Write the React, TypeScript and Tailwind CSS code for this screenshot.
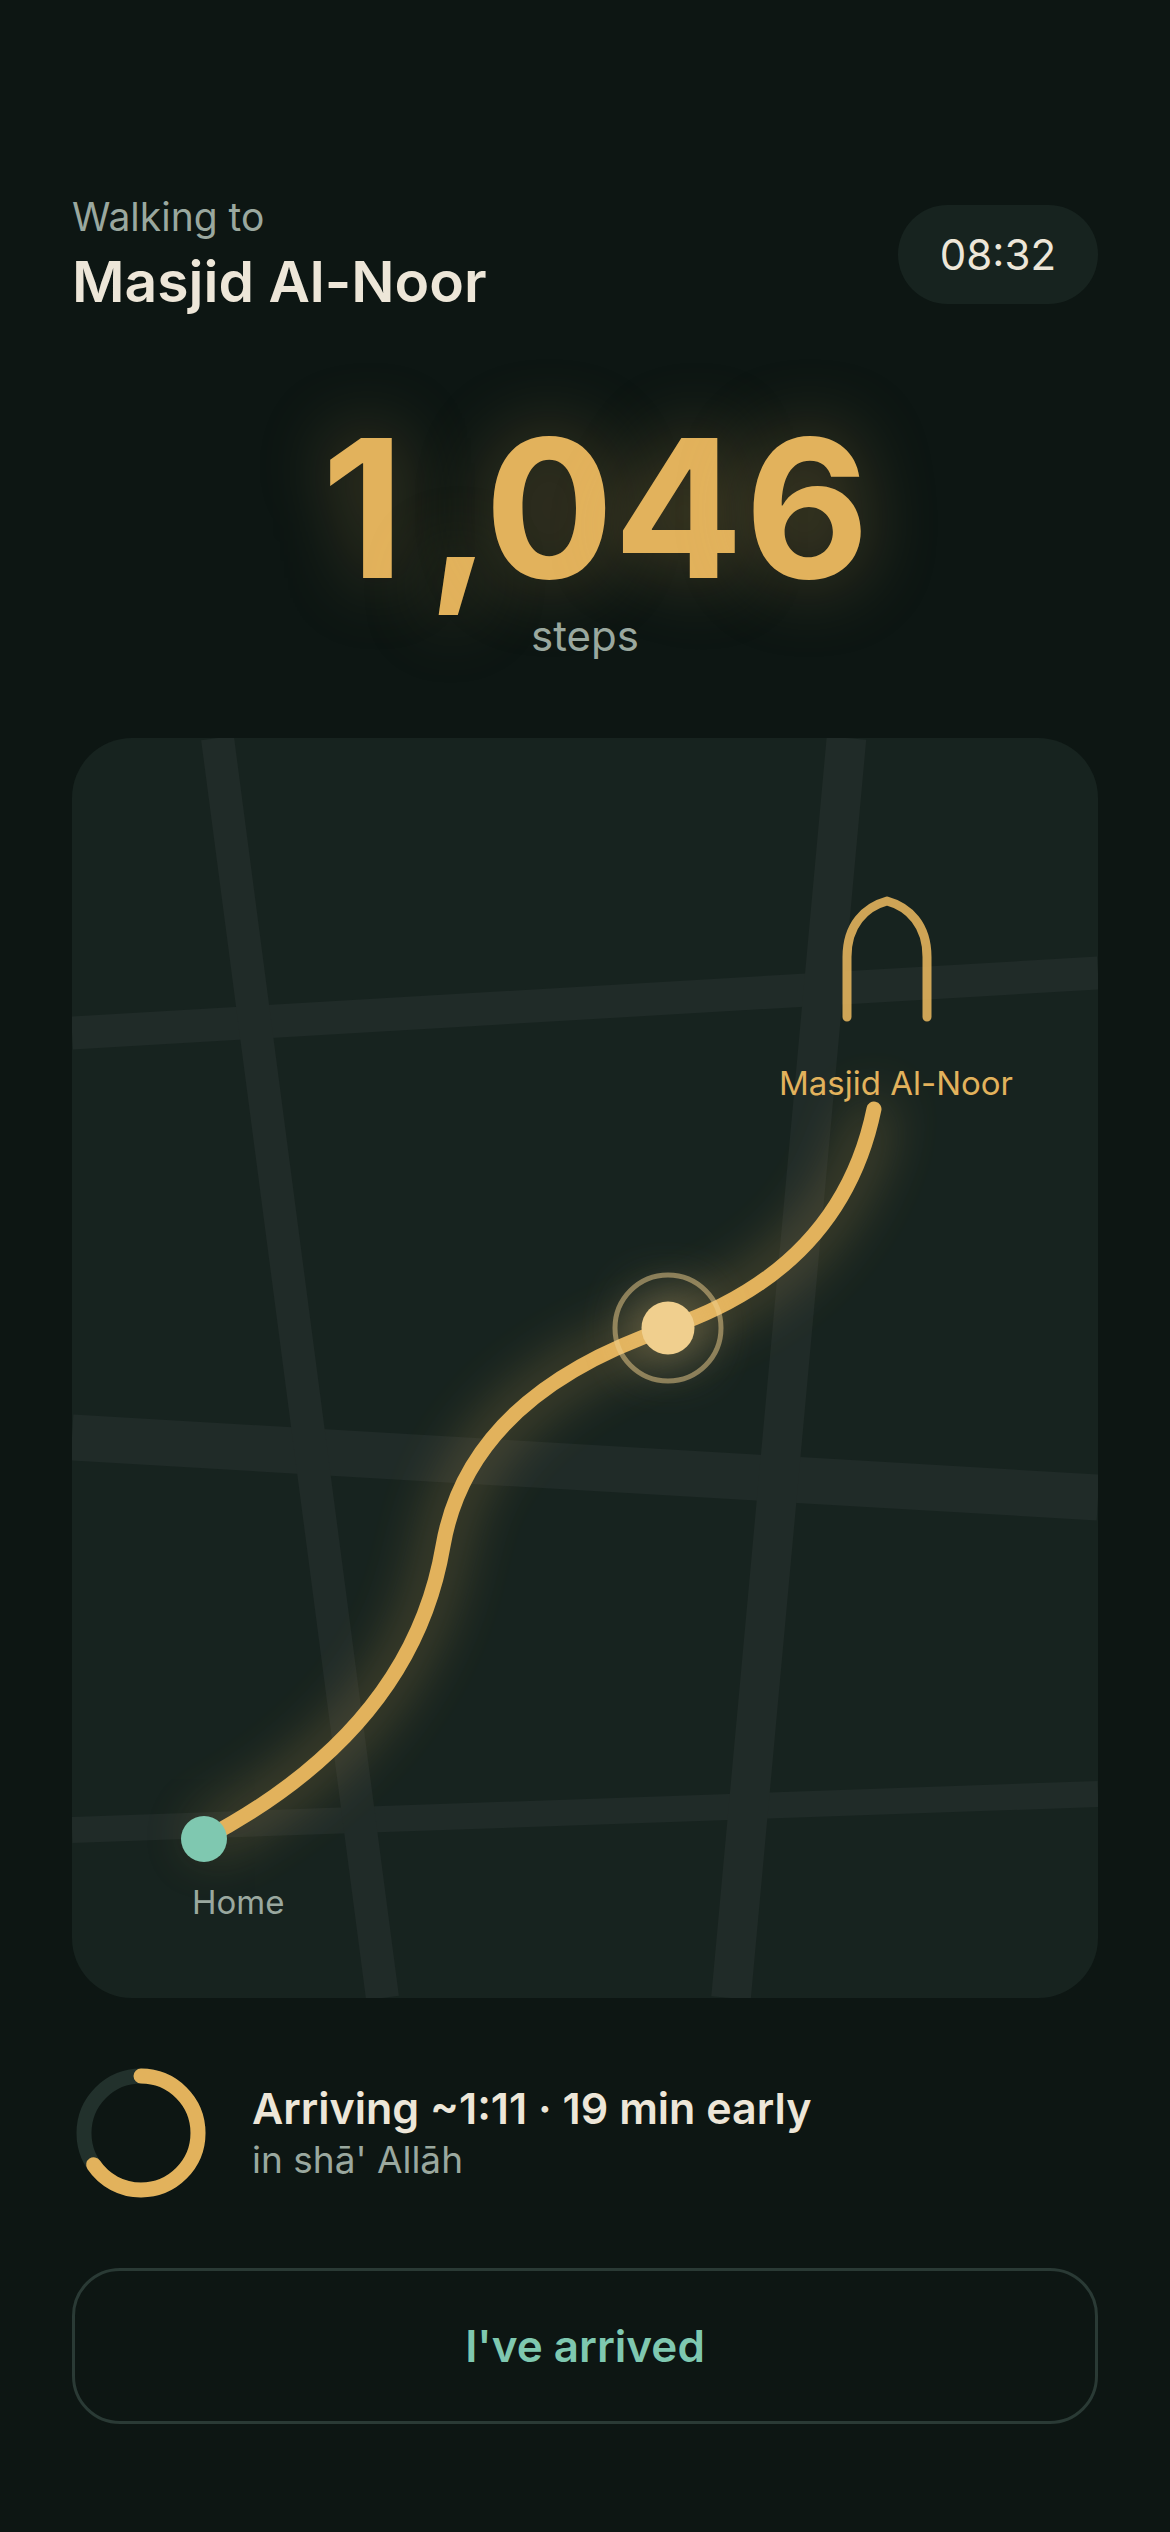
const ROUTE =
  "M132 1101 Q340 991 371 808 Q397 658 596 590 Q769 531 802 371";

const ROADS = [
  { d: "M0 295 L1026 235", width: 33 },
  { d: "M0 699.5 L1026 759.5", width: 46 },
  { d: "M0 1092 L1026 1056", width: 26 },
  { d: "M145.5 0 L310.5 1260", width: 33 },
  { d: "M774.5 0 L659 1260", width: 39.6 },
];

function Header({ name, elapsed }: { name: string; elapsed: string }) {
  return (
    <header className="flex items-center justify-between">
      <div className="flex flex-col gap-1.5">
        <p className="text-[39px] leading-[50px] text-[#9aa89f]">Walking to</p>
        <h1 className="text-[57px] leading-[68px] font-semibold">{name}</h1>
      </div>
      <div className="rounded-full bg-[#17231f] px-[42px] py-6 text-[42px] leading-[51px]">
        {elapsed}
      </div>
    </header>
  );
}

function StepCounter({ steps }: { steps: number }) {
  const chars = steps.toLocaleString("en-US").split("");

  return (
    <section className="mt-24 flex flex-col items-center gap-1.5">
      <p className="text-[192px] leading-[192px] font-bold text-[#e2b25c] [text-shadow:0_0_76px_rgba(226,178,92,0.35)]">
        {chars.map((char, i) => (
          <span
            key={i}
            className={char === "," ? "inline-block w-[57px] text-center" : "inline-block w-[129px] text-center"}
          >
            {char}
          </span>
        ))}
      </p>
      <p className="text-[42px] leading-[51px] text-[#9aa89f]">steps</p>
    </section>
  );
}

function RouteMap({ destination }: { destination: string }) {
  return (
    <section className="mt-[77px] overflow-hidden rounded-[60px] bg-[#17231f]">
      <svg viewBox="0 0 1026 1260" className="block w-full" fill="none">
        <defs>
          <filter id="route-glow" filterUnits="userSpaceOnUse" x="0" y="200" width="1026" height="1060">
            <feGaussianBlur stdDeviation="28" />
          </filter>
          <filter id="walker-glow" x="-400%" y="-400%" width="900%" height="900%">
            <feGaussianBlur stdDeviation="30" />
          </filter>
        </defs>

        {ROADS.map((road) => (
          <path key={road.d} d={road.d} stroke="#202b28" strokeWidth={road.width} />
        ))}

        {/* mosque arch */}
        <path
          d="M775 279 V219 C775 187 793 169 815 163 C837 169 855 187 855 219 V279"
          stroke="#e2b25c"
          strokeWidth="9"
          strokeLinecap="round"
          strokeLinejoin="round"
          opacity="0.9"
        />

        <path d={ROUTE} stroke="#e2b25c" strokeWidth="15" strokeLinecap="round" opacity="0.65" filter="url(#route-glow)" />
        <path d={ROUTE} stroke="#e2b25c" strokeWidth="15" strokeLinecap="round" />

        <circle cx="132" cy="1101" r="23" fill="#7fc8b0" />

        {/* walker */}
        <circle cx="596" cy="590" r="27" fill="#f0cf8e" opacity="0.6" filter="url(#walker-glow)" />
        <circle cx="596" cy="590" r="53" stroke="#f0cf8e" strokeWidth="5" opacity="0.5" />
        <circle cx="596" cy="590" r="26.5" fill="#f0cf8e" />

        <text x="707" y="357" fill="#e2b25c" className="text-[33px]">
          {destination}
        </text>
        <text x="120" y="1176" fill="#9aa89f" className="text-[33px]">
          Home
        </text>
      </svg>
    </section>
  );
}

function ProgressRing({ value }: { value: number }) {
  return (
    <svg viewBox="0 0 138 138" className="size-[138px] -rotate-90" fill="none">
      <circle cx="69" cy="69" r="57" stroke="#22312c" strokeWidth="15" />
      <circle
        cx="69"
        cy="69"
        r="57"
        stroke="#e2b25c"
        strokeWidth="15"
        strokeLinecap="round"
        pathLength="100"
        strokeDasharray={`${value} 100`}
      />
    </svg>
  );
}

export default function App() {
  return (
    <main className="min-h-screen bg-[#0d1613] px-[72px] pt-48 pb-[108px] font-['Inter',sans-serif] text-[#ede6d8]">
      <Header name="Masjid Al-Noor" elapsed="08:32" />
      <StepCounter steps={1046} />
      <RouteMap destination="Masjid Al-Noor" />

      <section className="mt-[66px] flex items-center gap-[42px]">
        <ProgressRing value={65.6} />
        <div>
          <p className="text-[43px] leading-[54px] font-semibold">
            Arriving ~1:11 · 19 min early
          </p>
          <p className="text-[37px] leading-[50px] text-[#9aa89f]">in shā' Allāh</p>
        </div>
      </section>

      <button
        type="button"
        className="mt-[66px] h-[156px] w-full rounded-[48px] border-3 border-[#2a3a35] text-[44px] font-semibold text-[#7fc8b0]"
      >
        I've arrived
      </button>
    </main>
  );
}
